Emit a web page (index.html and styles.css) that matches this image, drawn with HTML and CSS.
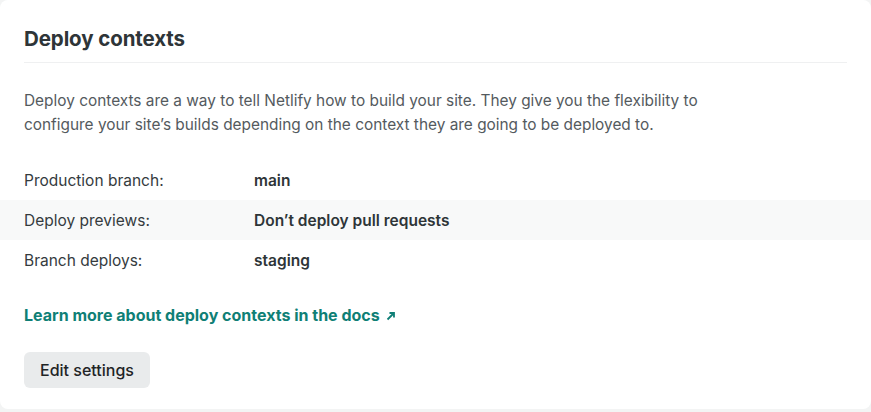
FILE: index.html
```html
<!DOCTYPE html>
<html>
<head>
<meta charset="utf-8">
<link rel="stylesheet" href="styles.css">
</head>
<body>
<section class="card">
  <header class="card-head">
    <h2 class="title">Deploy contexts</h2>
  </header>
  <p class="desc">Deploy contexts are a way to tell Netlify how to build your site. They give you the flexibility to configure your site’s builds depending on the context they are going to be deployed to.</p>
  <dl class="rows">
    <div class="row"><dt>Production branch:</dt><dd>main</dd></div>
    <div class="row alt"><dt>Deploy previews:</dt><dd>Don’t deploy pull requests</dd></div>
    <div class="row"><dt>Branch deploys:</dt><dd>staging</dd></div>
  </dl>
  <a class="doc-link" href="#">Learn more about deploy contexts in the docs <svg class="arrow" width="10" height="10" viewBox="0 0 10 10"><path d="M1.5 8.5 L8 2 M3.5 2 H8 V6.5" fill="none" stroke="currentColor" stroke-width="1.8"/></svg></a>
  <div class="actions"><button class="btn">Edit settings</button></div>
</section>
</body>
</html>
```

FILE: styles.css
```css
html, body { margin: 0; padding: 0; }
body {
  background: #f3f4f4;
  font-family: Inter, "Noto Sans", sans-serif;
  color: #2e3538;
}
.card {
  background: #fff;
  border-radius: 8px;
  width: 871px;
  height: 409px;
  box-sizing: border-box;
  padding-top: 26px;
}
.card-head {
  margin: 0 24px;
  border-bottom: 1px solid #eff0f1;
  padding-bottom: 10px;
}
.title {
  margin: 0;
  font-size: 20.5px;
  line-height: 26px;
  font-weight: 700;
  color: #2e3538;
  letter-spacing: -0.1px;
}
.desc {
  margin: 26px 24px 0;
  width: 720px;
  font-size: 15.4px;
  line-height: 24px;
  color: #545a5e;
}
.rows { margin: 23px 0 0; }
.row {
  display: flex;
  height: 40px;
  align-items: center;
  padding-left: 24px;
  font-size: 15.5px;
}
.row.alt { background: #f8f9f9; }
.row dt { width: 230px; color: #353b3e; }
.row dd { margin: 0; font-weight: 600; color: #2e3538; }
.doc-link {
  display: inline-flex;
  align-items: center;
  gap: 6px;
  margin: 25px 24px 0;
  color: #0f7f76;
  font-weight: 700;
  font-size: 16px;
  text-decoration: none;
}
.arrow { margin-top: 1px; }
.actions { margin: 27px 24px 0; }
.btn {
  background: #e9ebec;
  border: 0;
  border-radius: 6px;
  height: 36px;
  padding: 0 16px;
  font-family: inherit;
  font-size: 16px;
  font-weight: 500;
  color: #1f2426;
}
```
